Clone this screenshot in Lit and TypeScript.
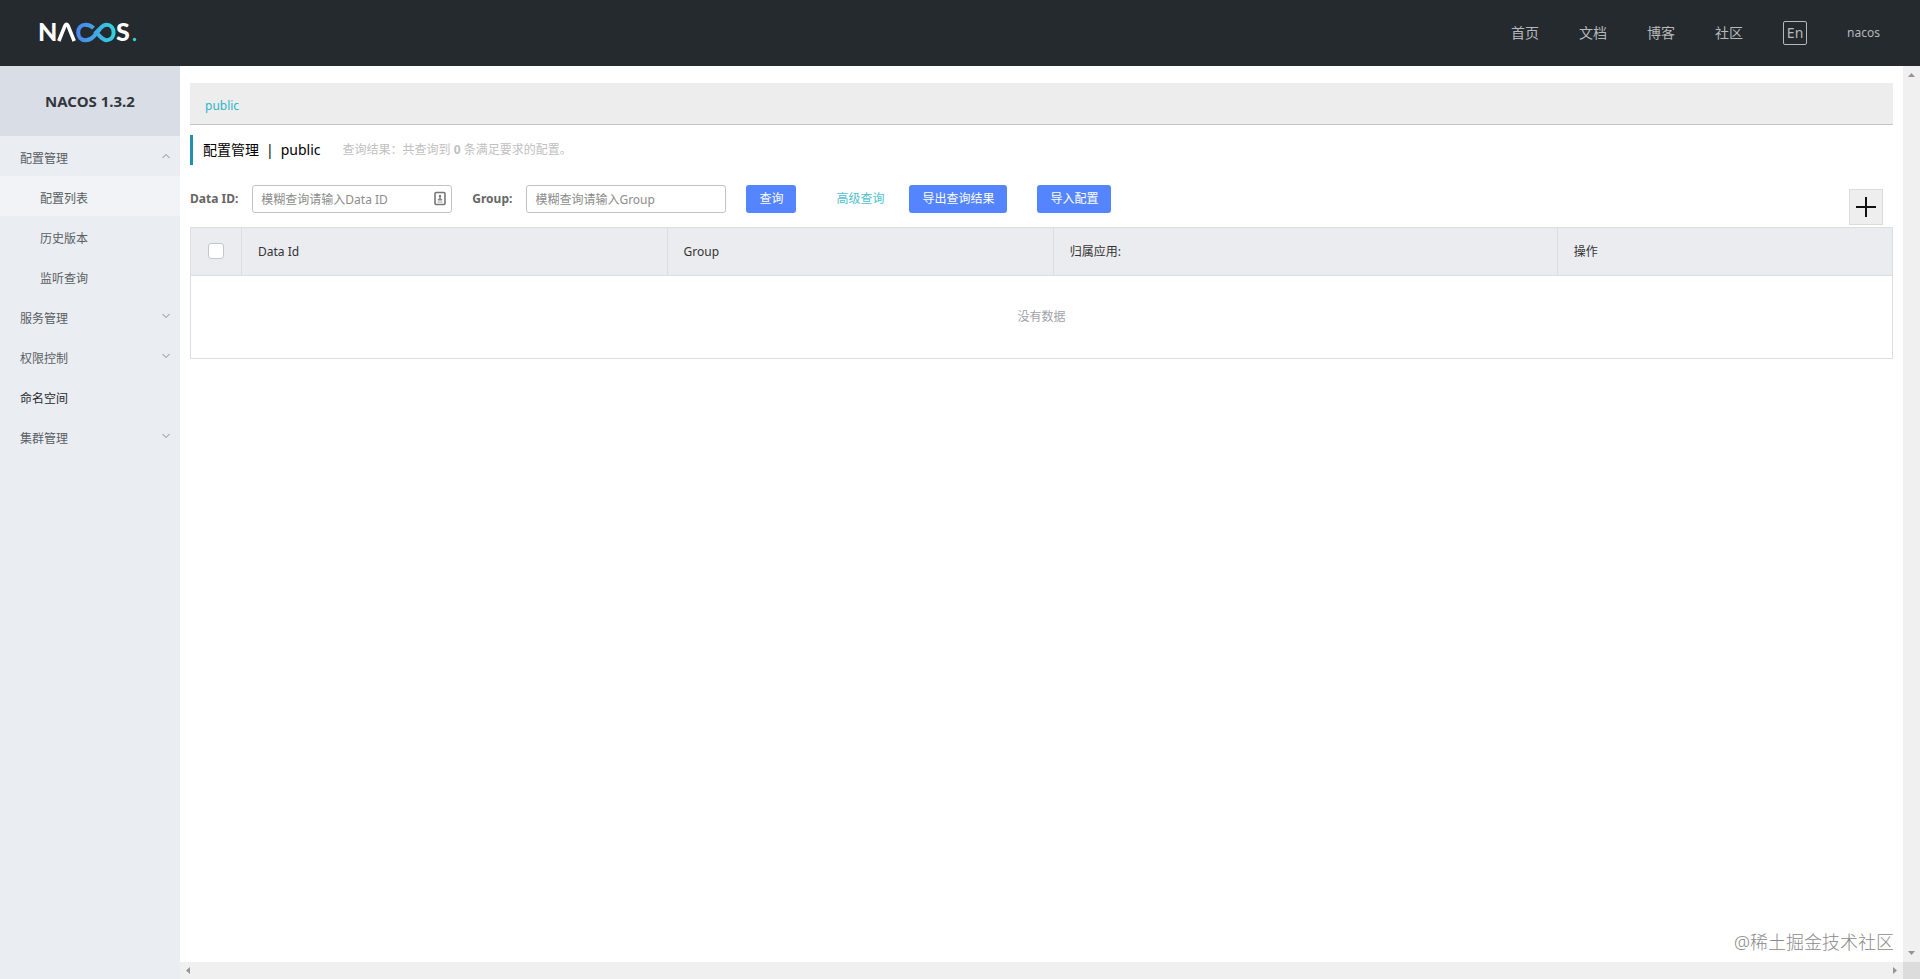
import { LitElement, html, css, svg } from "lit";
import { customElement, state } from "lit/decorators.js";

interface MenuEntry {
  label: string;
  children?: string[];
  open?: boolean;
}

const FONT = css`"Noto Sans", "Noto Sans CJK SC", sans-serif`;

@customElement("nacos-header")
export class NacosHeader extends LitElement {
  static styles = css`
    :host {
      display: block;
      background: #252a2f;
      font-family: ${FONT};
    }
    .bar {
      display: flex;
      align-items: center;
      justify-content: space-between;
      height: 66px;
      padding: 0 40px 0 36px;
    }
    .logo {
      display: block;
      line-height: 0;
    }
    .logo text {
      font-family: Lato, sans-serif;
      font-weight: 900;
      fill: #fff;
    }
    .links {
      display: flex;
      align-items: center;
      gap: 40px;
    }
    a {
      color: #b6b9bb;
      text-decoration: none;
      font-size: 14px;
      line-height: 24px;
    }
    .lang {
      box-sizing: border-box;
      width: 24px;
      height: 24px;
      padding: 0;
      border: 1px solid #b6b9bb;
      border-radius: 2px;
      background: none;
      color: #b6b9bb;
      font-family: inherit;
      font-size: 14px;
      line-height: 20px;
    }
    .user {
      font-size: 12px;
    }
  `;

  render() {
    return html`
      <header class="bar">
        <a class="logo" href="#" aria-label="NACOS">
          <svg width="108" height="40" viewBox="-4 -9 108 40">
            <defs>
              <linearGradient id="loop" gradientUnits="userSpaceOnUse" x1="36" y1="0" x2="75" y2="0">
                <stop offset="0" stop-color="#4a83ec" />
                <stop offset="0.5" stop-color="#41a7e6" />
                <stop offset="1" stop-color="#33d5dc" />
              </linearGradient>
            </defs>
            <text x="-2" y="19" font-size="25">N</text>
            <path
              d="M18.8 19 L25 3.6 Q26.5 1.2 28 3.6 L34.2 19"
              fill="none"
              stroke="#fff"
              stroke-width="3.6"
              stroke-linejoin="round"
            />
            <g fill="none" stroke="url(#loop)" stroke-width="4">
              <path d="M53.5 6.2 C51 3.6 48.5 2.8 45.5 2.8 C41 2.8 38.2 6 38.2 10.5 C38.2 15 41 18.2 45.5 18.2 C48.5 18.2 51 17.4 53.5 14.6 L60 7" />
              <path d="M56.2 10.5 L60 6.6 C62.5 4 64 2.8 66.5 2.8 C71 2.8 73.6 6 73.6 10.5 C73.6 15 71 18.2 66.5 18.2 C64 18.2 62.5 17 60 14.4 Z" />
            </g>
            <text x="76" y="19" font-size="25">S</text>
            <circle cx="94.5" cy="17.5" r="1.7" fill="#35d3cd" />
          </svg>
        </a>
        <nav class="links">
          <a href="#">首页</a>
          <a href="#">文档</a>
          <a href="#">博客</a>
          <a href="#">社区</a>
          <button class="lang" type="button">En</button>
          <a class="user" href="#">nacos</a>
        </nav>
      </header>
    `;
  }
}

@customElement("nacos-sidebar")
export class NacosSidebar extends LitElement {
  static styles = css`
    :host {
      display: block;
      background: #eaedf2;
      font-family: ${FONT};
    }
    h1 {
      margin: 0;
      background: #d9dde5;
      color: #33373d;
      font-size: 15px;
      font-weight: 700;
      line-height: 70px;
      text-align: center;
    }
    ul {
      margin: 0;
      padding: 0;
      list-style: none;
    }
    .item,
    .sub {
      box-sizing: border-box;
      display: flex;
      align-items: center;
      justify-content: space-between;
      width: 100%;
      height: 40px;
      padding: 0 10px 0 20px;
      border: 0;
      background: none;
      color: #5a5e63;
      font-family: inherit;
      font-size: 12px;
      line-height: 16px;
      text-align: left;
      text-decoration: none;
    }
    .label {
      padding-top: 6px;
    }
    .strong {
      color: #26292e;
    }
    .sub {
      padding-left: 40px;
    }
    .active {
      background: #f1f3f7;
    }
  `;

  @state() private menu: MenuEntry[] = [
    { label: "配置管理", open: true, children: ["配置列表", "历史版本", "监听查询"] },
    { label: "服务管理", children: [] },
    { label: "权限控制", children: [] },
    { label: "命名空间" },
    { label: "集群管理", children: [] },
  ];

  private toggle(entry: MenuEntry) {
    this.menu = this.menu.map((m) => (m === entry ? { ...m, open: !m.open } : m));
  }

  private arrow(open?: boolean) {
    return html`<svg width="8" height="8" viewBox="0 0 8 8" fill="none" stroke="#85898f">
      ${open ? svg`<path d="M0.5 6 L4 2.5 L7.5 6" />` : svg`<path d="M0.5 2 L4 5.5 L7.5 2" />`}
    </svg>`;
  }

  render() {
    return html`
      <h1>NACOS 1.3.2</h1>
      <ul>
        ${this.menu.map(
          (m) => html`<li>
            ${m.children
              ? html`<button class="item" type="button" @click=${() => this.toggle(m)}>
                  <span class="label">${m.label}</span>${this.arrow(m.open)}
                </button>`
              : html`<a class="item strong" href="#"><span class="label">${m.label}</span></a>`}
            ${m.open
              ? html`<ul>
                  ${m.children?.map(
                    (c, i) => html`<li>
                      <a class="sub ${i === 0 ? "active" : ""}" href="#"><span class="label">${c}</span></a>
                    </li>`
                  )}
                </ul>`
              : ""}
          </li>`
        )}
      </ul>
    `;
  }
}

@customElement("nacos-config-list")
export class NacosConfigList extends LitElement {
  static styles = css`
    :host {
      display: block;
      padding: 17px 10px 0;
      font-family: ${FONT};
      font-size: 12px;
      line-height: 16px;
    }
    a {
      color: #2db4c6;
      text-decoration: none;
    }
    .namespaces {
      display: flex;
      align-items: center;
      height: 36px;
      padding: 5px 15px 0;
      border-bottom: 1px solid #c4c4c4;
      background: #ededed;
    }
    .title {
      display: flex;
      align-items: center;
      gap: 22px;
      height: 30px;
      margin: 10px 0 20px;
      padding-left: 10px;
      border-left: 3px solid #2090ad;
    }
    h2 {
      display: flex;
      gap: 7px;
      margin: 0;
      color: #000;
      font-size: 14px;
      font-weight: 400;
      line-height: 20px;
    }
    .result {
      color: #bfbfbf;
    }
    form {
      display: flex;
      align-items: flex-start;
      height: 42px;
    }
    .field {
      display: flex;
      align-items: center;
      gap: 14px;
      margin-right: 20px;
      color: #666;
      font-weight: 700;
    }
    .box {
      box-sizing: border-box;
      display: flex;
      align-items: center;
      width: 200px;
      height: 28px;
      padding: 0 5px 0 8px;
      border: 1px solid #c0c3c9;
      border-radius: 3px;
      background: #fff;
    }
    .box input {
      flex: 1;
      min-width: 0;
      padding: 0;
      border: 0;
      outline: 0;
      background: none;
      color: #333;
      font-family: inherit;
      font-size: 12px;
    }
    .box input::placeholder {
      color: #8c8c8c;
    }
    .primary {
      height: 28px;
      padding: 0 13px;
      border: 0;
      border-radius: 3px;
      background: #5584ff;
      color: #fff;
      font-family: inherit;
      font-size: 12px;
      line-height: 28px;
    }
    .advanced {
      margin: 0 25px 0 40px;
      color: #4fbfcd;
      line-height: 28px;
    }
    .import {
      margin-left: 30px;
    }
    .add {
      display: flex;
      align-items: center;
      justify-content: center;
      width: 34px;
      height: 36px;
      margin: 4px 10px 0 auto;
      padding: 0;
      border: 1px solid #dcdcdc;
      background: #eee;
    }
    table {
      width: 100%;
      border-collapse: collapse;
      table-layout: fixed;
    }
    th,
    td {
      box-sizing: border-box;
      padding: 0 16px;
      border: 1px solid #dcdee3;
    }
    th {
      height: 48px;
      background: #ebecf0;
      color: #333;
      font-weight: 400;
      text-align: left;
    }
    .pick {
      width: 51px;
      padding: 0 0 2px;
    }
    .id {
      width: 25%;
    }
    .group {
      width: 22.7%;
    }
    .app {
      width: 29.6%;
    }
    .pick input {
      display: block;
      appearance: none;
      box-sizing: border-box;
      width: 16px;
      height: 16px;
      margin: 0 auto;
      border: 1px solid #c4c6cf;
      border-radius: 3px;
      background: #fff;
    }
    .pick input:checked {
      background: #5584ff;
    }
    .empty {
      height: 83px;
      color: #a0a2a8;
      text-align: center;
    }
  `;

  render() {
    return html`
      <div class="namespaces"><a href="#">public</a></div>
      <div class="title">
        <h2><span>配置管理</span><span>|</span><span>public</span></h2>
        <span class="result">查询结果：共查询到 <b>0</b> 条满足要求的配置。</span>
      </div>
      <form @submit=${(e: Event) => e.preventDefault()}>
        <div class="field">
          <label for="data-id">Data ID:</label>
          <div class="box">
            <input id="data-id" type="text" placeholder="模糊查询请输入Data ID" />
            <svg width="12" height="16" viewBox="0 0 12 16">
              <rect x="1" y="1.5" width="10" height="12" rx="1" fill="none" stroke="#777" stroke-width="1.6" />
              <circle cx="6" cy="5" r="1.2" fill="#777" />
              <path d="M5.2 6 H6.8 V7.5 L8.2 8.2 V9.5 H3.8 V8.2 L5.2 7.5 Z" fill="#888" />
              <path d="M3.5 11 H8.5" stroke="#aaa" />
            </svg>
          </div>
        </div>
        <div class="field">
          <label for="group">Group:</label>
          <div class="box"><input id="group" type="text" placeholder="模糊查询请输入Group" /></div>
        </div>
        <button class="primary" type="submit">查询</button>
        <a class="advanced" href="#">高级查询</a>
        <button class="primary" type="button">导出查询结果</button>
        <button class="primary import" type="button">导入配置</button>
        <button class="add" type="button" aria-label="新建配置">
          <svg width="20" height="20" viewBox="0 0 20 20" stroke="#111" stroke-width="2">
            <path d="M0 10 H20 M10 0 V20" />
          </svg>
        </button>
      </form>
      <table>
        <thead>
          <tr>
            <th class="pick"><input type="checkbox" aria-label="全选" /></th>
            <th class="id">Data Id</th>
            <th class="group">Group</th>
            <th class="app">归属应用:</th>
            <th>操作</th>
          </tr>
        </thead>
        <tbody>
          <tr>
            <td class="empty" colspan="5">没有数据</td>
          </tr>
        </tbody>
      </table>
    `;
  }
}

@customElement("app-root")
export class AppRoot extends LitElement {
  static styles = css`
    :host {
      display: grid;
      grid-template: auto 1fr / 180px 1fr;
      height: 100vh;
      background: #fff;
      font-family: ${FONT};
    }
    nacos-header {
      grid-column: 1 / -1;
    }
    .pane {
      display: grid;
      grid-template: 1fr 17px / 1fr 17px;
      min-width: 0;
      min-height: 0;
    }
    .view {
      position: relative;
      min-width: 0;
      overflow: hidden;
    }
    .mark {
      position: absolute;
      right: 9px;
      bottom: 7px;
      color: #8a8a8a;
      font-size: 18px;
      font-weight: 300;
      line-height: 26px;
    }
    .track {
      display: flex;
      align-items: center;
      justify-content: space-between;
      background: #f0f0f0;
    }
    .vertical {
      flex-direction: column;
    }
    .track svg {
      display: block;
      fill: #959595;
    }
    .corner {
      background: #dcdcdc;
    }
  `;

  render() {
    return html`
      <nacos-header></nacos-header>
      <nacos-sidebar></nacos-sidebar>
      <div class="pane">
        <main class="view">
          <nacos-config-list></nacos-config-list>
          <div class="mark">@稀土掘金技术社区</div>
        </main>
        <div class="track vertical">
          <svg width="17" height="17" viewBox="0 0 17 17"><path d="M5 11 L8.5 7 L12 11 Z" /></svg>
          <svg width="17" height="17" viewBox="0 0 17 17"><path d="M5 6 L8.5 10 L12 6 Z" /></svg>
        </div>
        <div class="track">
          <svg width="17" height="17" viewBox="0 0 17 17"><path d="M10 5 L6 8.5 L10 12 Z" /></svg>
          <svg width="17" height="17" viewBox="0 0 17 17"><path d="M7 5 L11 8.5 L7 12 Z" /></svg>
        </div>
        <div class="corner"></div>
      </div>
    `;
  }
}
